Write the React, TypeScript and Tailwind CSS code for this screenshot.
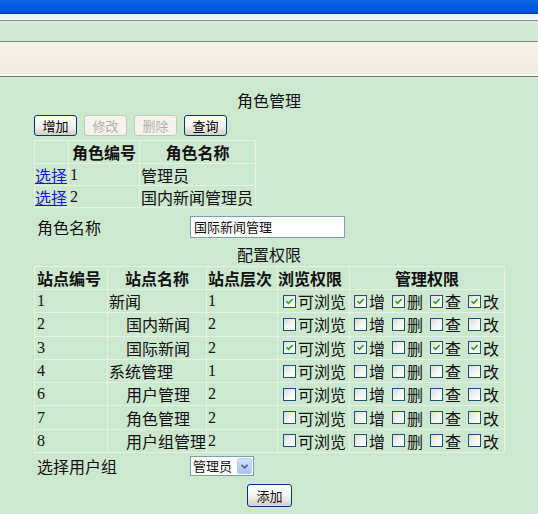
import React from "react";

const cjk = "font-['Noto_Sans_CJK_SC',sans-serif]";
const serif = "font-['Liberation_Serif','Noto_Sans_CJK_SC',serif]";

function Box({ checked }: { checked?: boolean }) {
  return (
    <span className="ml-[3px] mr-[2px] inline-flex h-[13px] w-[13px] shrink-0 items-center justify-center border border-[#1c5180] bg-gradient-to-br from-[#dcdcd6] via-[#f3f3ef] to-white">
      {checked && (
        <svg width="9" height="9" viewBox="0 0 9 9">
          <path d="M1.5 4.2 L3.6 6.4 L7.6 2" fill="none" stroke="#21a121" strokeWidth="1.6" />
        </svg>
      )}
    </span>
  );
}

function XpButton({ label, disabled }: { label: string; disabled?: boolean }) {
  return (
    <button
      className={`h-[21px] w-[43px] rounded-[3px] border text-[13px] leading-none ${cjk} ${
        disabled
          ? "border-[#c9c7ba] bg-[#f4f3ee] text-[#b4b2a6]"
          : "border-[#003c74] bg-gradient-to-b from-white via-[#f4f4f0] to-[#d6d0c5] text-black"
      }`}
    >
      {label}
    </button>
  );
}

const sites = [
  { id: "1", name: "新闻", lv: "1", perms: [true, true, true, true, true] },
  { id: "2", name: "国内新闻", lv: "2", perms: [false, false, false, false, false] },
  { id: "3", name: "国际新闻", lv: "2", perms: [true, true, false, true, true] },
  { id: "4", name: "系统管理", lv: "1", perms: [false, false, false, false, false] },
  { id: "6", name: "用户管理", lv: "2", perms: [false, false, false, false, false] },
  { id: "7", name: "角色管理", lv: "2", perms: [false, false, false, false, false] },
  { id: "8", name: "用户组管理", lv: "2", perms: [false, false, false, false, false] },
];

const td = "border border-[#e6f1e6] p-0";

export default function App() {
  return (
    <div className={`min-h-[514px] w-[538px] bg-[#cce8cf] text-[16px] text-[#111] ${cjk}`}>
      {/* window chrome bands */}
      <div className="h-[13px] bg-gradient-to-b from-[#0a63e0] to-[#0051e0]" />
      <div className="h-px bg-[#0039a8]" />
      <div className="h-[6px] bg-[#f2f6f4]" />
      <div className="h-px bg-[#8b978c]" />
      <div className="h-[20px] bg-[#d3e9d5]" />
      <div className="h-px bg-[#7c8a7d]" />
      <div className="h-[32px] bg-gradient-to-b from-[#f5f3ee] to-[#efece0]" />
      <div className="h-[2px] bg-[#fbfbf8]" />
      <div className="h-px bg-[#6e7b6f]" />
      <div className="h-px bg-[#e2ece2]" />

      <div className="pl-[34px]">
        <div className="mt-[12px] -ml-[34px] h-[20px] text-center leading-[20px]">角色管理</div>

        <div className="mt-[5px] flex gap-[7px]">
          <XpButton label="增加" />
          <XpButton label="修改" disabled />
          <XpButton label="删除" disabled />
          <XpButton label="查询" />
        </div>

        <table className="mt-[4px] border-collapse border border-[#eef5ee] border-r-[#a6b4a7] border-b-[#a6b4a7] leading-[20px]">
          <tbody>
            <tr className="h-[23px] font-bold">
              <td className={`${td} w-[34px]`} />
              <td className={`${td} w-[71px] text-center`}>角色编号</td>
              <td className={`${td} w-[116px] text-center`}>角色名称</td>
            </tr>
            {[
              ["1", "管理员"],
              ["2", "国内新闻管理员"],
            ].map(([id, name]) => (
              <tr key={id} className="h-[22px]">
                <td className={td}>
                  <a href="#" className="text-[#1a1ad0] underline">选择</a>
                </td>
                <td className={`${td} ${serif} pl-[1px]`}>{id}</td>
                <td className={`${td} pl-[1px]`}>{name}</td>
              </tr>
            ))}
          </tbody>
        </table>

        <div className="mt-[8px] flex h-[22px] items-center">
          <span className="w-[156px] pl-[3px]">角色名称</span>
          <div className="flex h-[22px] w-[155px] items-center border border-[#7f9db9] bg-white pl-[3px] text-[13px]">
            国际新闻管理
          </div>
        </div>

        <div className="mt-[4px] -ml-[34px] h-[24px] text-center leading-[24px]">配置权限</div>

        <table className="border-collapse border border-[#eef5ee] border-r-[#a6b4a7] border-b-[#a6b4a7] leading-[20px]">
          <tbody>
            <tr className="h-[23px] font-bold">
              <td className={`${td} w-[73px] pl-[2px]`}>站点编号</td>
              <td className={`${td} w-[99px] text-center`}>站点名称</td>
              <td className={`${td} w-[71px] pl-[1px]`}>站点层次</td>
              <td className={`${td} w-[72px] whitespace-nowrap`}>浏览权限</td>
              <td className={`${td} w-[155px] text-center`}>管理权限</td>
            </tr>
            {sites.map((s) => (
              <tr key={s.id} className="h-[23.3px]">
                <td className={`${td} ${serif} pl-[2px]`}>{s.id}</td>
                <td className={`${td} whitespace-nowrap ${s.lv === "1" ? "pl-[1px]" : "pl-[18px]"}`}>{s.name}</td>
                <td className={`${td} ${serif} pl-[1px]`}>{s.lv}</td>
                <td className={td}>
                  <div className="flex items-center whitespace-nowrap pl-[2px]">
                    <Box checked={s.perms[0]} />
                    <span>可浏览</span>
                  </div>
                </td>
                <td className={td}>
                  <div className="flex items-center whitespace-nowrap pl-[1px]">
                    {["增", "删", "查", "改"].map((c, i) => (
                      <span key={c} className="mr-[4px] flex items-center last:mr-0">
                        <Box checked={s.perms[i + 1]} />
                        <span>{c}</span>
                      </span>
                    ))}
                  </div>
                </td>
              </tr>
            ))}
          </tbody>
        </table>

        <div className="mt-[3px] flex h-[20px] items-center">
          <span className="w-[156px] pl-[3px]">选择用户组</span>
          <div className="flex h-[20px] w-[64px] items-center border border-[#7f9db9] bg-white text-[13px]">
            <span className="flex-1 pl-[2px]">管理员</span>
            <span className="mr-px flex h-[16px] w-[15px] items-center justify-center rounded-[2px] border border-[#b9cdf3] bg-gradient-to-b from-[#d5e3fc] to-[#a9c2f5]">
              <svg width="7" height="5" viewBox="0 0 7 5">
                <path d="M0.5 0.8 L3.5 3.8 L6.5 0.8" fill="none" stroke="#4d6185" strokeWidth="1.6" />
              </svg>
            </span>
          </div>
        </div>

        <div className="mt-[6px] pl-[213px]">
          <button
            className={`h-[23px] w-[45px] rounded-[3px] border border-[#003c74] bg-gradient-to-b from-white via-[#f4f4f0] to-[#d6d0c5] text-[13px] leading-none ${cjk}`}
          >
            添加
          </button>
        </div>
      </div>
    </div>
  );
}
